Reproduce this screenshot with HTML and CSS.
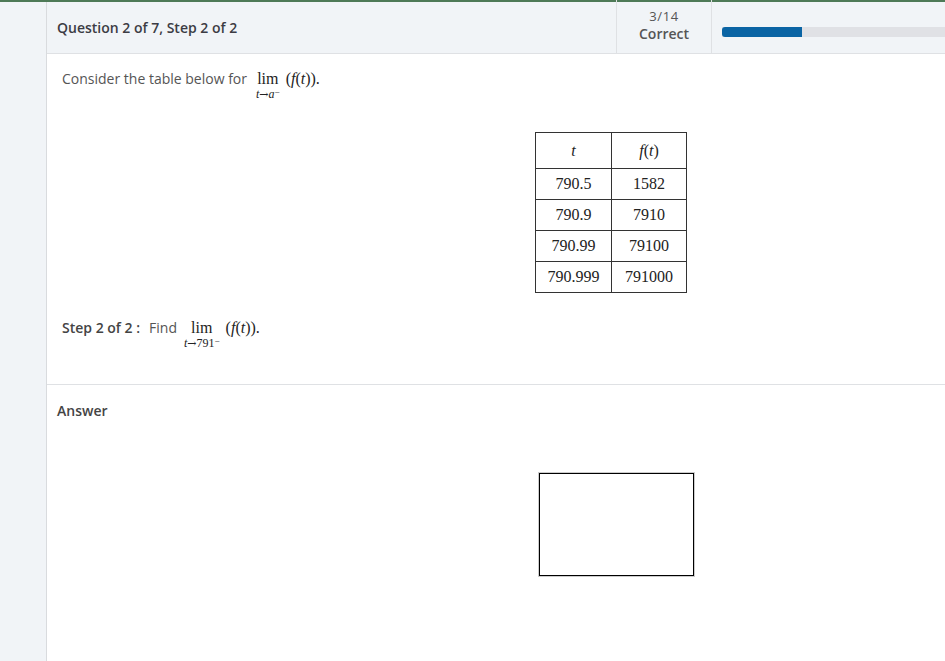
FILE: index.html
```html
<!DOCTYPE html>
<html>
<head>
<meta charset="utf-8">
<link rel="stylesheet" href="styles.css">
</head>
<body>
<div class="topline"></div>
<div class="layout">
  <div class="sidebar"></div>
  <div class="main">
    <div class="header">
      <div class="title">Question 2 of 7, Step 2 of 2</div>
      <div class="score"><div class="frac">3/14</div><div class="corr">Correct</div></div>
      <div class="progress"><div class="track"><div class="fill"></div></div></div>
    </div>
    <div class="question">
      <div class="line intro">
        <span>Consider the table below for</span>
        <span class="lim"><span class="limw">lim</span><span class="sub"><i>t</i><span class="arr">→</span><i>a</i><sup>−</sup></span></span>
        <span class="math">(<i>f</i>(<i>t</i>)).</span>
      </div>
      <table class="data">
        <tr class="head"><td><i>t</i></td><td><i>f</i>(<i>t</i>)</td></tr>
        <tr><td>790.5</td><td>1582</td></tr>
        <tr><td>790.9</td><td>7910</td></tr>
        <tr><td>790.99</td><td>79100</td></tr>
        <tr><td>790.999</td><td>791000</td></tr>
      </table>
      <div class="line step">
        <b>Step 2 of 2 :</b><span class="find">Find</span>
        <span class="lim"><span class="limw">lim</span><span class="sub"><i>t</i><span class="arr">→</span>791<sup>−</sup></span></span>
        <span class="math">(<i>f</i>(<i>t</i>)).</span>
      </div>
    </div>
    <div class="answer">
      <div class="alabel">Answer</div>
      <div class="abox"></div>
    </div>
  </div>
</div>
</body>
</html>
```
FILE: styles.css
```css
html, body { margin: 0; padding: 0; background: #fff; }
body { font-family: "Open Sans", sans-serif; color: #555; width: 945px; height: 661px; overflow: hidden; }
.topline { height: 2px; background: #4e7a57; }
.layout { display: flex; height: 659px; }
.sidebar { width: 46px; background: #f1f4f7; border-right: 1px solid #d9dbde; flex: none; }
.main { flex: 1; display: flex; flex-direction: column; }
.header { display: flex; height: 51px; background: #f1f4f7; border-bottom: 1px solid #dfe1e4; }
.title { flex: 1; padding-left: 10px; font-weight: 600; font-size: 14px; color: #3c3c44; display: flex; align-items: center; }
.score { width: 94px; border-left: 1px solid #dfe1e4; border-right: 1px solid #dfe1e4; display: flex; flex-direction: column; align-items: center; justify-content: center; font-size: 13px; line-height: 17px; color: #555; margin-top: -5px; }
.frac { letter-spacing: 0.6px; }
.corr { font-weight: 600; font-size: 14px; }
.progress { width: 223px; padding-left: 10px; display: flex; align-items: center; }
.track { flex: 1; height: 10px; background: #e0e1e5; margin-top: 8px; }
.fill { width: 80px; height: 10px; background: #0a64a4; border-radius: 3px 0 0 3px; }
.question { padding: 15px 0 0 15px; border-bottom: 1px solid #dfe1e4; height: 331px; box-sizing: border-box; }
.line { display: flex; align-items: flex-start; font-size: 14px; line-height: 20px; }
.lim { display: inline-flex; flex-direction: column; align-items: center; margin-left: 9px; font-family: "Liberation Serif", serif; color: #222; }
.limw { font-size: 16px; line-height: 19px; }
.sub { font-size: 12px; line-height: 11px; white-space: nowrap; padding-top: 1px; }
.arr { font-family: "DejaVu Serif", serif; font-size: 11px; }
.sub sup { font-size: 9px; line-height: 0; vertical-align: 3px; }
.math { font-family: "Liberation Serif", serif; font-size: 16px; color: #222; margin-left: 6px; line-height: 20px; }
.step .lim { margin-left: 7px; }
.find { margin-left: 9px; }
.step b { font-weight: 600; color: #444; }
.data { border-collapse: collapse; margin: 32px 0 0 473px; font-family: "Liberation Serif", serif; font-size: 16px; color: #222; }
.data td { border: 1px solid #333; height: 30px; padding: 0 9px; text-align: center; }
.data td:first-child { width: 57px; }
.data td:last-child { width: 56px; }
.data tr.head td { height: 35px; }
.step { margin-top: 25px; }
.answer { padding: 16px 0 0 10px; }
.alabel { font-weight: 600; font-size: 14px; color: #444; line-height: 20px; }
.abox { margin: 52px 0 0 482px; width: 153px; height: 101px; border: 1px solid #000; box-shadow: 0 0 0 1px #ccc; }
```
